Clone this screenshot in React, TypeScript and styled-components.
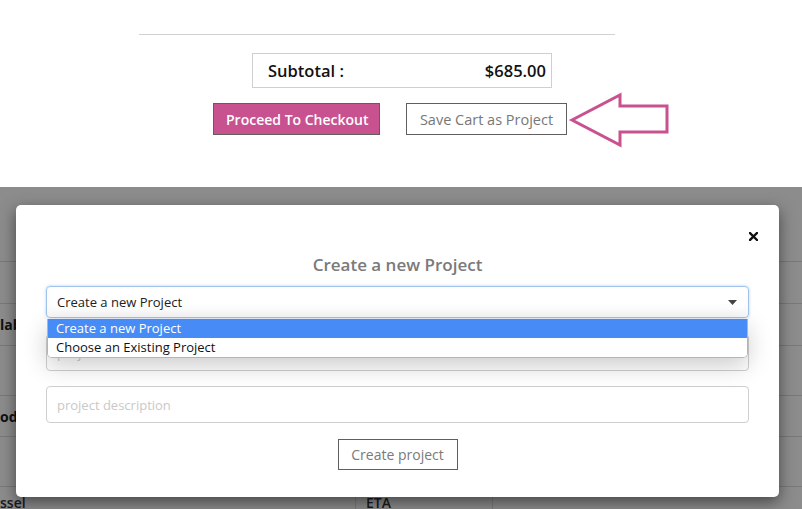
import React from "react";
import styled, { createGlobalStyle } from "styled-components";

const Global = createGlobalStyle`
  html, body { margin: 0; padding: 0; background: #fff; }
  body { font-family: "Open Sans", "Liberation Sans", sans-serif; width: 802px; height: 509px; overflow: hidden; }
  * { box-sizing: border-box; }
`;

const Page = styled.div`
  width: 802px;
  height: 509px;
  display: flex;
  flex-direction: column;
`;

const CartSection = styled.section`
  height: 187px;
  padding-top: 34px;
  display: flex;
  flex-direction: column;
  align-items: flex-start;
`;

const Rule = styled.hr`
  margin: 0 0 0 139px;
  width: 476px;
  border: 0;
  border-top: 1px solid #d2d2d2;
  height: 0;
`;

const SubtotalBox = styled.div`
  margin: 18px 0 0 252px;
  width: 300px;
  height: 35px;
  border: 1px solid #cfcfcf;
  display: flex;
  align-items: center;
  justify-content: space-between;
  padding: 0 5px 0 15px;
  font-size: 16.5px;
  font-weight: 600;
  color: #111;
`;

const ButtonRow = styled.div`
  margin: 3px 0 0 213px;
  display: flex;
  align-items: flex-start;
`;

const Button = styled.button<{ $primary?: boolean }>`
  height: 32px;
  padding: 0 12px;
  font-family: "Open Sans", "Liberation Sans", sans-serif;
  font-size: 14px;
  font-weight: ${(p) => (p.$primary ? 600 : 400)};
  color: ${(p) => (p.$primary ? "#fff" : "#777")};
  background: ${(p) => (p.$primary ? "#c85290" : "#fff")};
  border: 1px solid #5f5f5f;
  cursor: pointer;
  white-space: nowrap;
`;

const CheckoutButton = styled(Button)`
  width: 167px;
  margin-top: 12px;
`;

const SaveButton = styled(Button)`
  margin: 12px 0 0 26px;
  width: 161px;
  font-size: 14.5px;
`;

const ArrowSvg = styled.svg`
  margin-left: 1px;
  flex: none;
`;

const ModalSection = styled.section`
  position: relative;
  flex: 1;
  overflow: hidden;
`;

const BgTable = styled.div`
  display: flex;
  flex-direction: column;
  font-size: 14px;
  font-weight: 700;
  color: #222;
`;

const BgRow = styled.div<{ $h: number }>`
  height: ${(p) => p.$h}px;
  border-bottom: 1px solid #dcdcdc;
  display: flex;
  align-items: center;
`;

const BgLastRow = styled.div`
  display: grid;
  grid-template-columns: 355px 137px 1fr;
  height: 40px;
`;

const BgCell = styled.div<{ $bordered?: boolean }>`
  border-left: ${(p) => (p.$bordered ? "1px solid #dcdcdc" : "none")};
  padding: 6px 10px;
  font-weight: 600;
  color: #333;
  &:first-child { padding-left: 0; }
`;

const Overlay = styled.div`
  position: absolute;
  inset: 0;
  background: rgba(0, 0, 0, 0.45);
  padding: 18px 0 0 16px;
`;

const Modal = styled.div`
  width: 763px;
  height: 292px;
  background: #fff;
  border-radius: 5px;
  box-shadow: 0 5px 15px rgba(0, 0, 0, 0.5);
  padding: 0 30px;
  display: flex;
  flex-direction: column;
`;

const ModalHeader = styled.div`
  height: 48px;
  display: flex;
  justify-content: flex-end;
  align-items: flex-end;
`;

const CloseButton = styled.button`
  border: 0;
  background: none;
  padding: 0;
  margin-right: -10px;
  margin-bottom: 11px;
  width: 12px;
  height: 12px;
  display: flex;
  align-items: center;
  justify-content: center;
  cursor: pointer;
`;

const Title = styled.h2`
  margin: 0;
  text-align: center;
  font-size: 17px;
  font-weight: 600;
  color: #7a7a7a;
  line-height: 24px;
`;

const SelectWrap = styled.div`
  position: relative;
  margin-top: 9px;
`;

const SelectBox = styled.div`
  height: 32px;
  border: 1px solid #9fc3ea;
  border-radius: 4px;
  box-shadow: 0 0 3px rgba(102, 160, 230, 0.5), inset 0 -6px 8px rgba(0, 0, 0, 0.03);
  display: flex;
  align-items: center;
  justify-content: space-between;
  padding: 0 11px 0 10px;
  font-size: 13px;
  color: #222;
`;

const Dropdown = styled.ul`
  position: absolute;
  top: 33px;
  left: 1px;
  right: 1px;
  margin: 0;
  padding: 0;
  list-style: none;
  background: #fff;
  border: 1px solid #b5b5b5;
  border-top: 0;
  border-radius: 0 0 5px 5px;
  overflow: hidden;
  box-shadow: 0 8px 24px rgba(0, 0, 0, 0.2);
  z-index: 2;
`;

const Option = styled.li<{ $active?: boolean }>`
  height: 19px;
  line-height: 19px;
  padding-left: 8px;
  font-size: 13px;
  color: ${(p) => (p.$active ? "#fff" : "#111")};
  background: ${(p) => (p.$active ? "#468bf6" : "#fff")};
`;

const Input = styled.input<{ $gap: number }>`
  margin-top: ${(p) => p.$gap}px;
  height: 37px;
  width: 100%;
  border: 1px solid #cfcfcf;
  border-radius: 4px;
  padding: 0 10px;
  font-family: "Open Sans", "Liberation Sans", sans-serif;
  font-size: 13px;
  color: #333;
  background: #fff;
  outline: none;
  &::placeholder { color: #c9c9c9; }
`;

const Footer = styled.div`
  margin-top: 16px;
  display: flex;
  justify-content: center;
`;

const CreateButton = styled(Button)`
  width: 120px;
  height: 31px;
  line-height: 27px;
  color: #7a7a7a;
`;

export default function App() {
  return (
    <>
      <Global />
      <Page>
        <CartSection>
          <Rule />
          <SubtotalBox>
            <span>Subtotal :</span>
            <span>$685.00</span>
          </SubtotalBox>
          <ButtonRow>
            <CheckoutButton $primary>Proceed To Checkout</CheckoutButton>
            <SaveButton>Save Cart as Project</SaveButton>
            <ArrowSvg width="102" height="58" viewBox="0 0 102 58">
              <polygon
                points="4,29 52,4 52,15 99,15 99,41 52,41 52,54"
                fill="none"
                stroke="#c85290"
                strokeWidth="3"
                strokeLinejoin="miter"
              />
            </ArrowSvg>
          </ButtonRow>
        </CartSection>
        <ModalSection>
          <BgTable>
            <BgRow $h={75} />
            <BgRow $h={42} />
            <BgRow $h={42}>lab</BgRow>
            <BgRow $h={50} />
            <BgRow $h={41}>od</BgRow>
            <BgRow $h={50} />
            <BgLastRow>
              <BgCell>ssel</BgCell>
              <BgCell $bordered>ETA</BgCell>
              <BgCell $bordered />
            </BgLastRow>
          </BgTable>
          <Overlay>
            <Modal>
              <ModalHeader>
                <CloseButton aria-label="close">
                  <svg width="9" height="9" viewBox="0 0 9 9">
                    <path d="M1 1 L8 8 M8 1 L1 8" stroke="#111" strokeWidth="2.4" strokeLinecap="square" />
                  </svg>
                </CloseButton>
              </ModalHeader>
              <Title>Create a new Project</Title>
              <SelectWrap>
                <SelectBox>
                  <span>Create a new Project</span>
                  <svg width="9" height="5" viewBox="0 0 9 5">
                    <polygon points="0,0 9,0 4.5,5" fill="#444" />
                  </svg>
                </SelectBox>
                <Dropdown>
                  <Option $active>Create a new Project</Option>
                  <Option>Choose an Existing Project</Option>
                </Dropdown>
              </SelectWrap>
              <Input $gap={16} placeholder="project name" />
              <Input $gap={15} placeholder="project description" />
              <Footer>
                <CreateButton>Create project</CreateButton>
              </Footer>
            </Modal>
          </Overlay>
        </ModalSection>
      </Page>
    </>
  );
}
